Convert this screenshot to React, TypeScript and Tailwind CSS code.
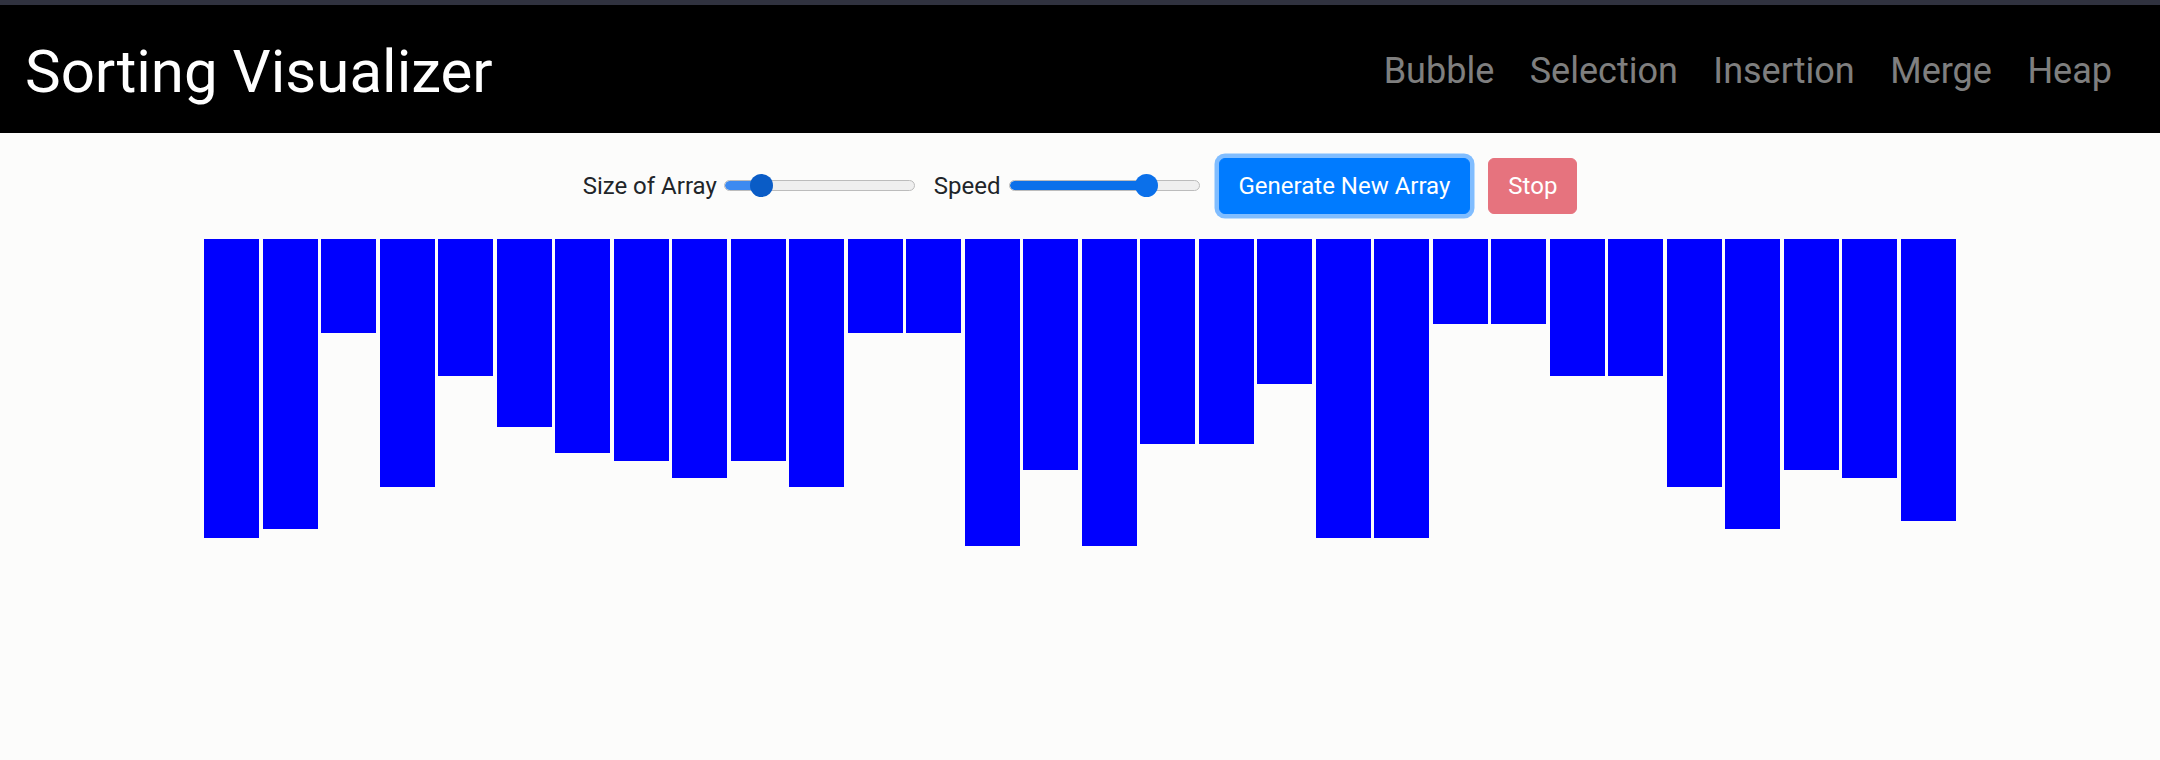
import React from 'react'

const VALUES = [35, 34, 11, 29, 16, 22, 25, 26, 28, 26, 29, 11, 11, 36, 27, 36, 24, 24, 17, 35, 35, 10, 10, 16, 16, 29, 34, 27, 28, 33]
const LINKS = ['Bubble', 'Selection', 'Insertion', 'Merge', 'Heap']

interface SliderProps {
  pos: number
  fill: string
  thumb: string
}

function Slider({ pos, fill, thumb }: SliderProps) {
  return (
    <div className="relative w-[191px] h-[23px] flex items-center">
      <div className="w-full h-[11px] rounded-full bg-[#efefef] border border-[#bcbcbc] overflow-hidden">
        <div className="h-full rounded-full" style={{ width: pos + 6, background: fill }} />
      </div>
      <div
        className="absolute top-0 w-[23px] h-[23px] rounded-full"
        style={{ left: pos - 11.5, background: thumb }}
      />
    </div>
  )
}

export default function App() {
  return (
    <div className="min-h-screen bg-[#fcfcfb] font-['Roboto',sans-serif]">
      <div className="h-[5px] bg-[#30323f]" />
      <nav className="h-[128px] bg-black flex items-center justify-between pl-[25px] pr-[48px]">
        <span className="mt-[5px] text-[60px] leading-none text-white">Sorting Visualizer</span>
        <div className="mt-[3px] flex gap-[35.5px] text-[36px] leading-none text-white/50">
          {LINKS.map((l) => (
            <a key={l} href="#" className="hover:text-white/75">
              {l}
            </a>
          ))}
        </div>
      </nav>

      <div className="mt-[20px] h-[65px] flex items-center justify-center text-[24px] text-[#212529]">
        <span>Size of Array</span>
        <div className="ml-[7px]">
          <Slider pos={38} fill="#3d8af0" thumb="#0a5cc6" />
        </div>
        <span className="ml-[19px]">Speed</span>
        <div className="ml-[8px]">
          <Slider pos={138} fill="#0b70ea" thumb="#0b70ea" />
        </div>
        <button className="ml-[19px] px-[19px] py-[9px] border-[1.5px] border-[#007bff] bg-[#007bff] text-white leading-[36px] rounded-[6px] ring-[4.5px] ring-[#80bdff]">
          Generate New Array
        </button>
        <button className="ml-[18px] px-[19px] py-[9px] border-[1.5px] border-[#e6737e] bg-[#e6737e] text-white leading-[36px] rounded-[6px]">
          Stop
        </button>
      </div>

      <div className="mt-[21px] flex justify-center items-start gap-[3.5px]">
        {VALUES.map((v, i) => (
          <div key={i} className="w-[55px] bg-[#0000ff]" style={{ height: v * 8.54 }} />
        ))}
      </div>
    </div>
  )
}
